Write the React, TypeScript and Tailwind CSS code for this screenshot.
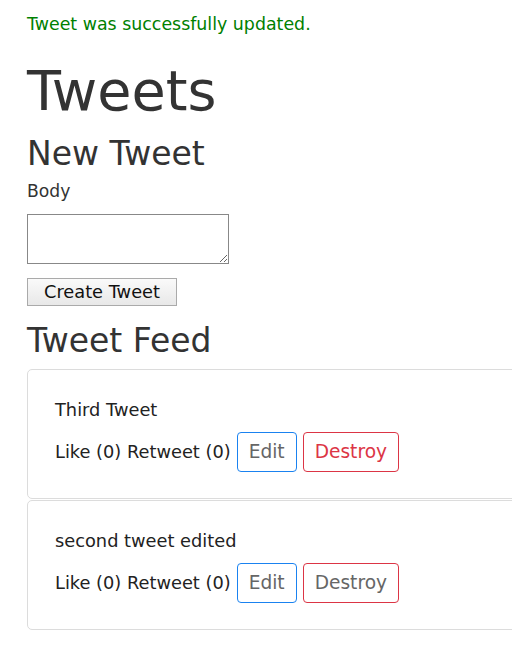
const font = { fontFamily: '"DejaVu Sans", Verdana, sans-serif' };

const Tweet = ({ body, destroyRed }: { body: string; destroyRed?: boolean }) => {
  return (
    <div className="w-[560px] border border-[#dcdcdc] rounded-[5px] px-[27px] pt-[28px] pb-[26px]">
      <p className="text-[17.8px] leading-[24px] text-[#222]">{body}</p>
      <div className="flex items-center mt-[10px] text-[17.8px] text-[#222]">
        <span>Like (0) Retweet (0)</span>
        <button className="ml-[6px] h-[40px] px-[11px] border border-[#1a82f0] rounded-[4px] text-[18.6px] text-[#666]">
          Edit
        </button>
        <button
          className={`ml-[6px] h-[40px] px-[11px] border border-[#dc3545] rounded-[4px] text-[18.6px] ${
            destroyRed ? 'text-[#dc3545]' : 'text-[#666]'
          }`}
        >
          Destroy
        </button>
      </div>
    </div>
  );
};

export default function App() {
  return (
    <div className="w-[512px] h-[652px] overflow-hidden bg-white" style={font}>
      <div className="pl-[27px] pt-[14px]">
        <p className="text-[17.4px] leading-[20px] text-[#008000]">Tweet was successfully updated.</p>
        <h1 className="mt-[25px] text-[55.6px] leading-[64px] text-[#333]">Tweets</h1>
        <h2 className="mt-[11px] text-[33px] leading-[40px] text-[#333]">New Tweet</h2>
        <label className="block mt-[7px] text-[17.2px] leading-[20px] text-[#333]">Body</label>
        <textarea className="block mt-[13px] w-[202px] h-[50px] border border-[#888] bg-white" />
        <button className="block mt-[14px] w-[150px] h-[28px] border border-[#aaa] bg-gradient-to-b from-[#fafafa] to-[#e8e8e8] text-[17.8px] leading-[20px] text-[#111]">
          Create Tweet
        </button>
        <h2 className="mt-[15px] text-[33px] leading-[40px] text-[#333]">Tweet Feed</h2>
        <div className="mt-[8px] flex flex-col gap-[1px]">
          <Tweet body="Third Tweet" destroyRed />
          <Tweet body="second tweet edited" />
        </div>
      </div>
    </div>
  );
}
